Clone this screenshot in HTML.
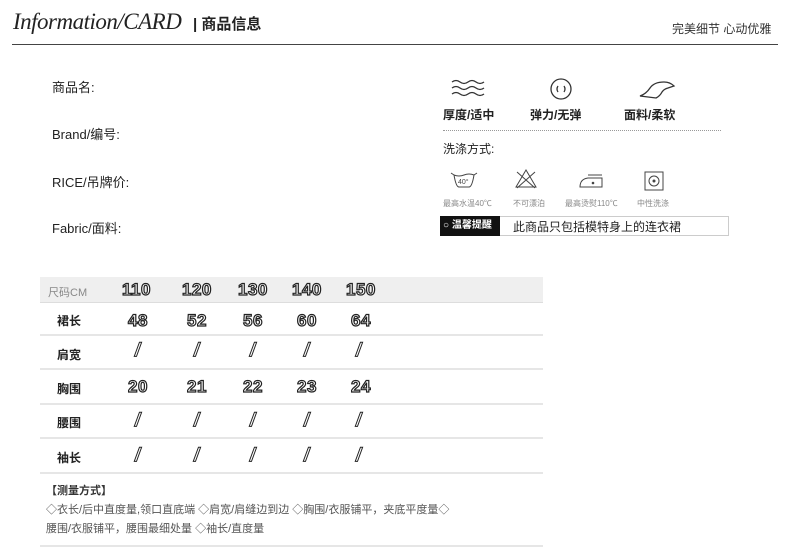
<!DOCTYPE html>
<html><head><meta charset="utf-8"><style>
body{margin:0;width:800px;height:560px;background:#fff;position:relative;overflow:hidden;font-family:"Liberation Sans","Noto Sans CJK SC",sans-serif;color:#222}
.a{position:absolute;white-space:nowrap}
.num{font-family:"Liberation Sans",sans-serif;font-weight:bold;font-size:17px;color:#fff;-webkit-text-stroke:1.2px #222;letter-spacing:0.5px}
.sl{font-family:"Liberation Sans",sans-serif;font-weight:bold;font-size:19px;color:#fff;-webkit-text-stroke:1px #222;transform:skewX(-10deg)}
.lab{font-size:12px;font-weight:bold;color:#222}
.row{position:absolute;left:40px;width:503px;border-bottom:2px solid #e6e6e6}
.cap{font-size:8px;color:#888}
</style></head><body>
<div class="a" style="left:13px;top:9px;font-family:'Liberation Serif',serif;font-style:italic;font-size:23px;color:#222;letter-spacing:-0.5px">Information/CARD</div>
<div class="a" style="left:193px;top:13px;font-size:15px;font-weight:bold">| 商品信息</div>
<div class="a" style="left:672px;top:20px;font-size:12px;color:#333">完美细节 心动优雅</div>
<div class="a" style="left:12px;top:44px;width:766px;height:1px;background:#444"></div>

<div class="a" style="left:52px;top:77px;font-size:13px">商品名:</div>
<div class="a" style="left:52px;top:124px;font-size:13px">Brand/编号:</div>
<div class="a" style="left:52px;top:172px;font-size:13px">RICE/吊牌价:</div>
<div class="a" style="left:52px;top:218px;font-size:13px">Fabric/面料:</div>

<svg class="a" style="left:450px;top:78px" width="40" height="22" viewBox="0 0 40 22" fill="none" stroke="#333" stroke-width="1.3"><path d="M2 4q4-3 8 0t8 0t8 0t8 0M2 10q4-3 8 0t8 0t8 0t8 0M2 16q4-3 8 0t8 0t8 0t8 0"/></svg>
<svg class="a" style="left:549px;top:77px" width="24" height="24" viewBox="0 0 24 24" fill="none" stroke="#333" stroke-width="1.3"><circle cx="12" cy="12" r="10"/><path d="M9 9q-2 3 0 6M15 9q2 3 0 6"/></svg>
<svg class="a" style="left:638px;top:80px" width="38" height="20" viewBox="0 0 38 20" fill="none" stroke="#333" stroke-width="1.3"><path d="M2 16q6-2 10-8t14-6q6 0 10 4l-6 2q-4 1-6 4q-2 4-6 6z"/></svg>
<div class="a" style="left:443px;top:106px;font-size:12px;font-weight:bold">厚度/适中</div>
<div class="a" style="left:530px;top:106px;font-size:12px;font-weight:bold">弹力/无弹</div>
<div class="a" style="left:624px;top:106px;font-size:12px;font-weight:bold">面料/柔软</div>
<div class="a" style="left:443px;top:130px;width:278px;border-top:1px dotted #999"></div>
<div class="a" style="left:443px;top:140px;font-size:12px">洗涤方式:</div>

<svg class="a" style="left:450px;top:170px" width="28" height="20" viewBox="0 0 28 20" fill="none" stroke="#444" stroke-width="1"><path d="M1 3l3 2q2 12 5 12h10q3 0 5-12l3-2M4 5q5 2 10 0t10 0"/><text x="8" y="14" font-size="7" fill="#444" stroke="none" font-family="Liberation Sans">40°</text></svg>
<svg class="a" style="left:514px;top:168px" width="24" height="22" viewBox="0 0 24 22" fill="none" stroke="#444" stroke-width="1"><path d="M12 2L2 19h20z"/><path d="M3 4l18 16M21 4L3 20"/></svg>
<svg class="a" style="left:576px;top:171px" width="30" height="18" viewBox="0 0 30 18" fill="none" stroke="#444" stroke-width="1"><path d="M4 16q0-8 8-9h14v9zM12 4h14"/><circle cx="17" cy="12" r="0.8" fill="#444"/></svg>
<svg class="a" style="left:644px;top:171px" width="20" height="20" viewBox="0 0 20 20" fill="none" stroke="#444" stroke-width="1"><rect x="1" y="1" width="18" height="18"/><circle cx="10" cy="10" r="5"/><circle cx="10" cy="10" r="1" fill="#444"/></svg>
<div class="a cap" style="left:443px;top:198px">最高水温40℃</div>
<div class="a cap" style="left:513px;top:198px">不可漂泊</div>
<div class="a cap" style="left:565px;top:198px">最高烫熨110℃</div>
<div class="a cap" style="left:637px;top:198px">中性洗涤</div>
<div class="a" style="left:440px;top:216px;width:287px;height:18px;border:1px solid #ccc"></div>
<div class="a" style="left:440px;top:216px;width:60px;height:20px;background:#111;color:#fff;font-size:10px;line-height:20px;font-weight:bold;padding-left:3px;box-sizing:border-box">○ 温馨提醒</div>
<div class="a" style="left:513px;top:218px;font-size:12px;color:#222">此商品只包括模特身上的连衣裙</div>

<div class="a" style="left:40px;top:277px;width:503px;height:25px;background:#efefef;border-bottom:1px solid #ddd"></div>
<div class="a" style="left:48px;top:284px;font-size:11px;color:#888">尺码CM</div>
<div class="row" style="top:302px;height:32px"></div>
<div class="row" style="top:336px;height:32px"></div>
<div class="row" style="top:370px;height:33px"></div>
<div class="row" style="top:405px;height:32px"></div>
<div class="row" style="top:439px;height:33px"></div>
<div class="row" style="top:474px;height:71px"></div>

<div class="a lab" style="left:57px;top:312px">裙长</div>
<div class="a lab" style="left:57px;top:346px">肩宽</div>
<div class="a lab" style="left:57px;top:380px">胸围</div>
<div class="a lab" style="left:57px;top:414px">腰围</div>
<div class="a lab" style="left:57px;top:449px">袖长</div>

<div class="a num" style="left:122px;top:280px">110</div>
<div class="a num" style="left:182px;top:280px">120</div>
<div class="a num" style="left:238px;top:280px">130</div>
<div class="a num" style="left:292px;top:280px">140</div>
<div class="a num" style="left:346px;top:280px">150</div>

<div class="a num" style="left:128px;top:311px">48</div>
<div class="a num" style="left:187px;top:311px">52</div>
<div class="a num" style="left:243px;top:311px">56</div>
<div class="a num" style="left:297px;top:311px">60</div>
<div class="a num" style="left:351px;top:311px">64</div>

<div class="a num" style="left:128px;top:377px">20</div>
<div class="a num" style="left:187px;top:377px">21</div>
<div class="a num" style="left:243px;top:377px">22</div>
<div class="a num" style="left:297px;top:377px">23</div>
<div class="a num" style="left:351px;top:377px">24</div>

<div class="a sl" style="left:135px;top:340px">/</div><div class="a sl" style="left:194px;top:340px">/</div><div class="a sl" style="left:250px;top:340px">/</div><div class="a sl" style="left:304px;top:340px">/</div><div class="a sl" style="left:356px;top:340px">/</div>
<div class="a sl" style="left:135px;top:410px">/</div><div class="a sl" style="left:194px;top:410px">/</div><div class="a sl" style="left:250px;top:410px">/</div><div class="a sl" style="left:304px;top:410px">/</div><div class="a sl" style="left:356px;top:410px">/</div>
<div class="a sl" style="left:135px;top:445px">/</div><div class="a sl" style="left:194px;top:445px">/</div><div class="a sl" style="left:250px;top:445px">/</div><div class="a sl" style="left:304px;top:445px">/</div><div class="a sl" style="left:356px;top:445px">/</div>

<div class="a" style="left:46px;top:482px;font-size:11px;font-weight:bold;color:#333">【测量方式】</div>
<div class="a" style="left:46px;top:501px;font-size:11px;color:#555">◇衣长/后中直度量,领口直底端 ◇肩宽/肩缝边到边 ◇胸围/衣服铺平，夹底平度量◇</div>
<div class="a" style="left:46px;top:520px;font-size:11px;color:#555">腰围/衣服铺平，腰围最细处量 ◇袖长/直度量</div>
</body></html>
